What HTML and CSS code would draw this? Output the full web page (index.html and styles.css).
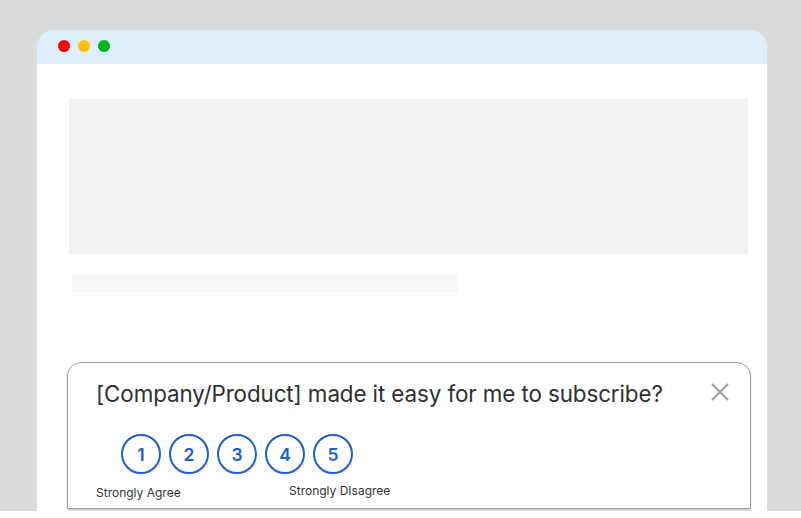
FILE: index.html
```html
<!DOCTYPE html>
<html>
<head>
<meta charset="utf-8">
<link rel="stylesheet" href="styles.css">
</head>
<body>
<div class="stage">
  <div class="window">
    <div class="titlebar">
      <span class="dot red"></span>
      <span class="dot yellow"></span>
      <span class="dot green"></span>
    </div>
    <div class="content">
      <div class="hero"></div>
      <div class="line"></div>
      <div class="survey">
        <div class="question">[Company/Product] made it easy for me to subscribe?</div>
        <button class="close" aria-label="Close">
          <svg width="18" height="18" viewBox="0 0 18 18"><path d="M1 1L17 17M17 1L1 17" stroke="#9a9a9a" stroke-width="1.8" fill="none"/></svg>
        </button>
        <div class="scale">
          <span class="opt">1</span>
          <span class="opt">2</span>
          <span class="opt">3</span>
          <span class="opt">4</span>
          <span class="opt">5</span>
        </div>
        <div class="labels">
          <span class="lab-left">Strongly Agree</span>
          <span class="lab-right">Strongly DIsagree</span>
        </div>
      </div>
    </div>
  </div>
</div>
<div class="floor"></div>
</body>
</html>
```
FILE: styles.css
```css
* { box-sizing: border-box; }
html, body { margin: 0; padding: 0; }
body {
  width: 801px;
  height: 518px;
  overflow: hidden;
  background: #ffffff;
  font-family: Inter, "Noto Sans", "Liberation Sans", sans-serif;
}
.stage {
  height: 511px;
  background: #dadada;
  padding: 30px 34px 0 37px;
  overflow: hidden;
}
.floor { height: 7px; background: #fdfdfd; }
.window {
  width: 730px;
  height: 481px;
  background: #ffffff;
  border-radius: 18px 18px 0 0;
  overflow: hidden;
}
.titlebar {
  height: 34px;
  background: #deeefc;
  display: flex;
  align-items: center;
  gap: 8px;
  padding: 0 0 2px 21px;
}
.dot { width: 12px; height: 12px; border-radius: 50%; display: block; }
.red { background: #ff0000; }
.yellow { background: #ffc000; }
.green { background: #00b21b; }
.content {
  padding: 35px 19px 0 32px;
  position: relative;
}
.hero {
  height: 155px;
  background: #f2f2f2;
  width: 679px;
}
.line {
  margin: 20px 0 0 3px;
  width: 386px;
  height: 18px;
  background: #f7f7f7;
}
.survey {
  position: relative;
  margin: 70px 0 0 -2px;
  width: 684px;
  height: 147px;
  background: #fff;
  border: 1px solid #9b9b9b;
  border-radius: 14px 14px 0 0;
  box-shadow: 0 2px 2px rgba(0,0,0,0.18);
  padding: 16px 0 0 28px;
}
.question {
  font-size: 22.4px;
  color: #303030;
  letter-spacing: -0.1px;
  line-height: 30px;
}
.close {
  position: absolute;
  top: 20px;
  right: 21px;
  width: 18px;
  height: 18px;
  padding: 0;
  border: 0;
  background: none;
}
.close svg { display: block; }
.scale {
  display: flex;
  gap: 8px;
  margin: 25px 0 0 25px;
}
.opt {
  width: 40px;
  height: 40px;
  border: 2px solid #1b5ed6;
  border-radius: 50%;
  display: flex;
  align-items: center;
  justify-content: center;
  color: #1b5ed6;
  font-weight: 600;
  font-size: 17.5px;
}
.labels {
  position: relative;
  height: 20px;
  margin-top: 4px;
  font-size: 12px;
  color: #333;
}
.lab-left { position: absolute; left: 0; top: 7px; }
.lab-right { position: absolute; left: 193px; top: 5px; }
```
